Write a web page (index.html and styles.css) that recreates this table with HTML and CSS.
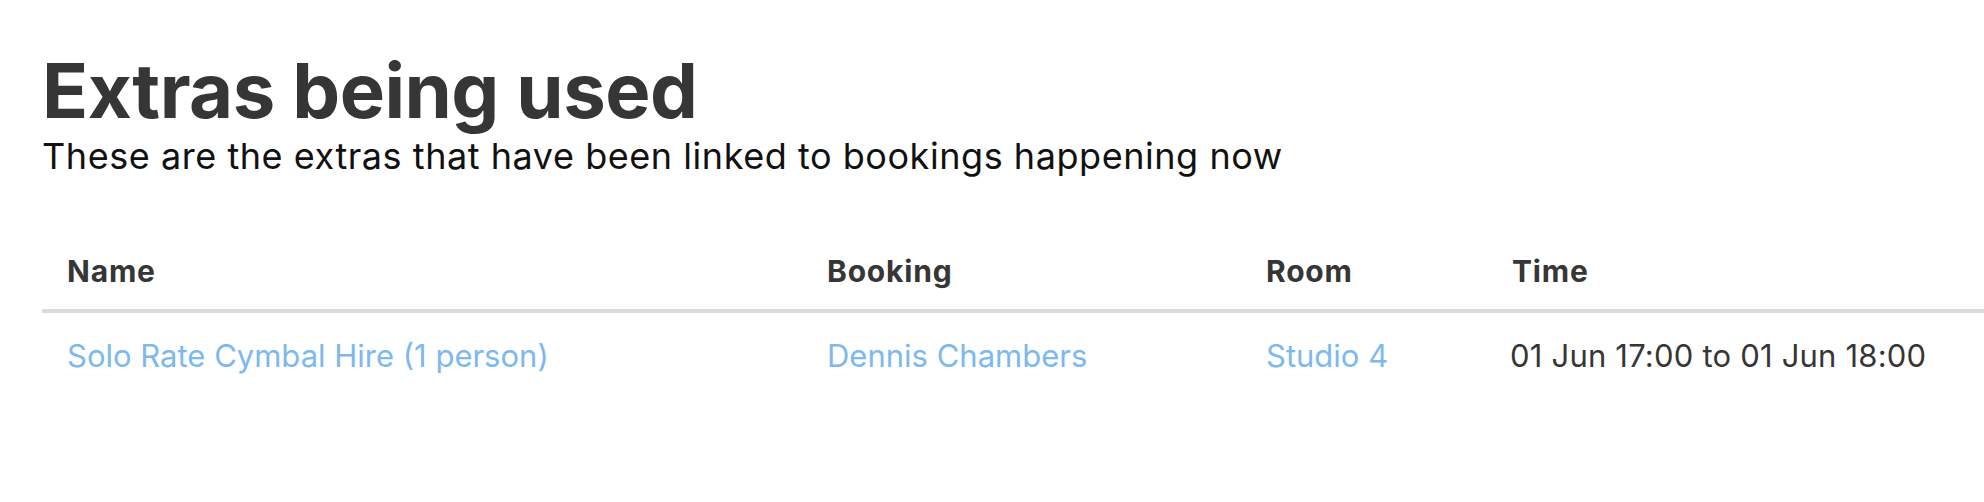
FILE: index.html
```html
<!DOCTYPE html>
<html lang="en">
<head>
<meta charset="utf-8">
<title>Extras being used</title>
<link rel="stylesheet" href="styles.css">
</head>
<body>
<main class="page">
  <header class="intro">
    <h1 class="title">Extras being used</h1>
    <p class="subtitle">These are the extras that have been linked to bookings happening now</p>
  </header>
  <table class="extras">
    <colgroup>
      <col class="col-name">
      <col class="col-booking">
      <col class="col-room">
      <col class="col-time">
    </colgroup>
    <thead>
      <tr>
        <th>Name</th>
        <th>Booking</th>
        <th>Room</th>
        <th>Time</th>
      </tr>
    </thead>
    <tbody>
      <tr>
        <td><a class="link" href="#">Solo Rate Cymbal Hire (1 person)</a></td>
        <td><a class="link" href="#">Dennis Chambers</a></td>
        <td><a class="link" href="#">Studio 4</a></td>
        <td class="time">01 Jun 17:00 to 01 Jun 18:00</td>
      </tr>
    </tbody>
  </table>
</main>
</body>
</html>
```

FILE: styles.css
```css
html, body {
  margin: 0;
  padding: 0;
  background: #ffffff;
}

body {
  font-family: Inter, "Noto Sans", "Liberation Sans", sans-serif;
  color: #363636;
}

.page {
  padding: 52px 0 0 42px;
}

.intro {
  display: flex;
  flex-direction: column;
  gap: 7px;
}

.title {
  margin: 0;
  font-size: 76px;
  line-height: 76px;
  font-weight: 700;
  color: #363636;
  letter-spacing: -0.5px;
}

.subtitle {
  margin: 0;
  font-size: 36px;
  line-height: 43px;
  font-weight: 400;
  color: #111111;
  letter-spacing: 0.55px;
}

.extras {
  margin-top: 55px;
  width: 100%;
  border-collapse: collapse;
  table-layout: fixed;
}

.col-name { width: 760px; }
.col-booking { width: 439px; }
.col-room { width: 246px; }
.col-time { width: auto; }

.extras th {
  text-align: left;
  font-size: 30px;
  line-height: 42px;
  font-weight: 700;
  color: #363636;
  letter-spacing: 0.8px;
  padding: 17px 24px 17px 25px;
  border-bottom: 4px solid #dbdbdb;
}

.extras td {
  font-size: 31px;
  line-height: 48px;
  font-weight: 400;
  color: #363636;
  padding: 19px 24px 13px 25px;
  white-space: nowrap;
}

.extras td.time {
  padding-left: 23px;
  letter-spacing: 0.2px;
}

.link {
  color: #7db9ee;
  text-decoration: none;
}
```
